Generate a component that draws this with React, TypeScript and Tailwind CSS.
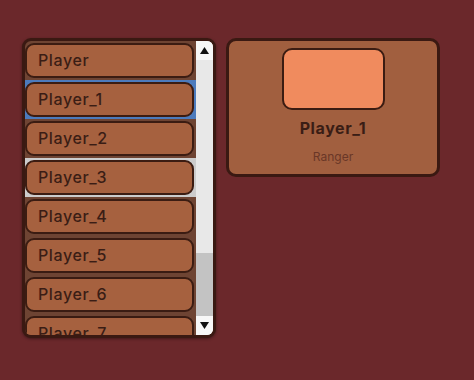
import React from "react";

const players = ["Player", "Player_1", "Player_2", "Player_3", "Player_4", "Player_5", "Player_6", "Player_7"];

export default function App() {
  return (
    <div
      className="w-[474px] h-[380px] bg-[#6b282b] flex items-start gap-[10px] pt-[38px] pl-[22px]"
      style={{ fontFamily: "Inter, 'Noto Sans', sans-serif" }}
    >
      <div className="w-[194px] h-[300px] rounded-[9px] border-[3px] border-[#3a1912] bg-[#6e4433] overflow-hidden flex shadow-[0_1px_3px_rgba(0,0,0,0.4)]">
        <div className="flex-1 flex flex-col overflow-hidden">
          {players.map((p, i) => (
            <div
              key={p}
              className={
                "shrink-0 h-[39px] flex items-center pr-[2px] " +
                (i === 1 ? "bg-[#4c7bbd]" : i === 3 ? "bg-[#cccccc]" : "")
              }
            >
              <div className="w-full h-[35px] rounded-[9px] border-[2px] border-[#3b1c12] bg-[#a6613f] flex items-center pl-[11px] pb-[2px] text-[16px] font-medium tracking-[0.6px] text-[#3a1d15]">
                {p}
              </div>
            </div>
          ))}
        </div>
        <div className="w-[17px] flex flex-col bg-[#e6e6e6]">
          <div className="h-[19px] bg-[#f7f7f7] flex items-center justify-center">
            <svg width="9" height="7" viewBox="0 0 9 7">
              <path d="M4.5 0 L9 7 L0 7 Z" fill="#111" />
            </svg>
          </div>
          <div className="flex-1 bg-[#e8e8e8]" />
          <div className="h-[63px] bg-[#c3c3c3]" />
          <div className="h-[19px] bg-[#f7f7f7] flex items-center justify-center">
            <svg width="9" height="7" viewBox="0 0 9 7">
              <path d="M0 0 L9 0 L4.5 7 Z" fill="#111" />
            </svg>
          </div>
        </div>
      </div>
      <div className="w-[214px] h-[139px] rounded-[10px] border-[3px] border-[#3a1912] bg-[#a15f3f] flex flex-col items-center pt-[7px]">
        <div className="w-[103px] h-[62px] rounded-[10px] border-[2px] border-[#3b1c12] bg-[#f08b5e]" />
        <div className="mt-[8px] text-[16px] font-bold tracking-[0.6px] text-[#3a1d15] leading-[20px]">Player_1</div>
        <div className="mt-[12px] text-[12px] text-[#6a3727] leading-[14px]">Ranger</div>
      </div>
    </div>
  );
}
